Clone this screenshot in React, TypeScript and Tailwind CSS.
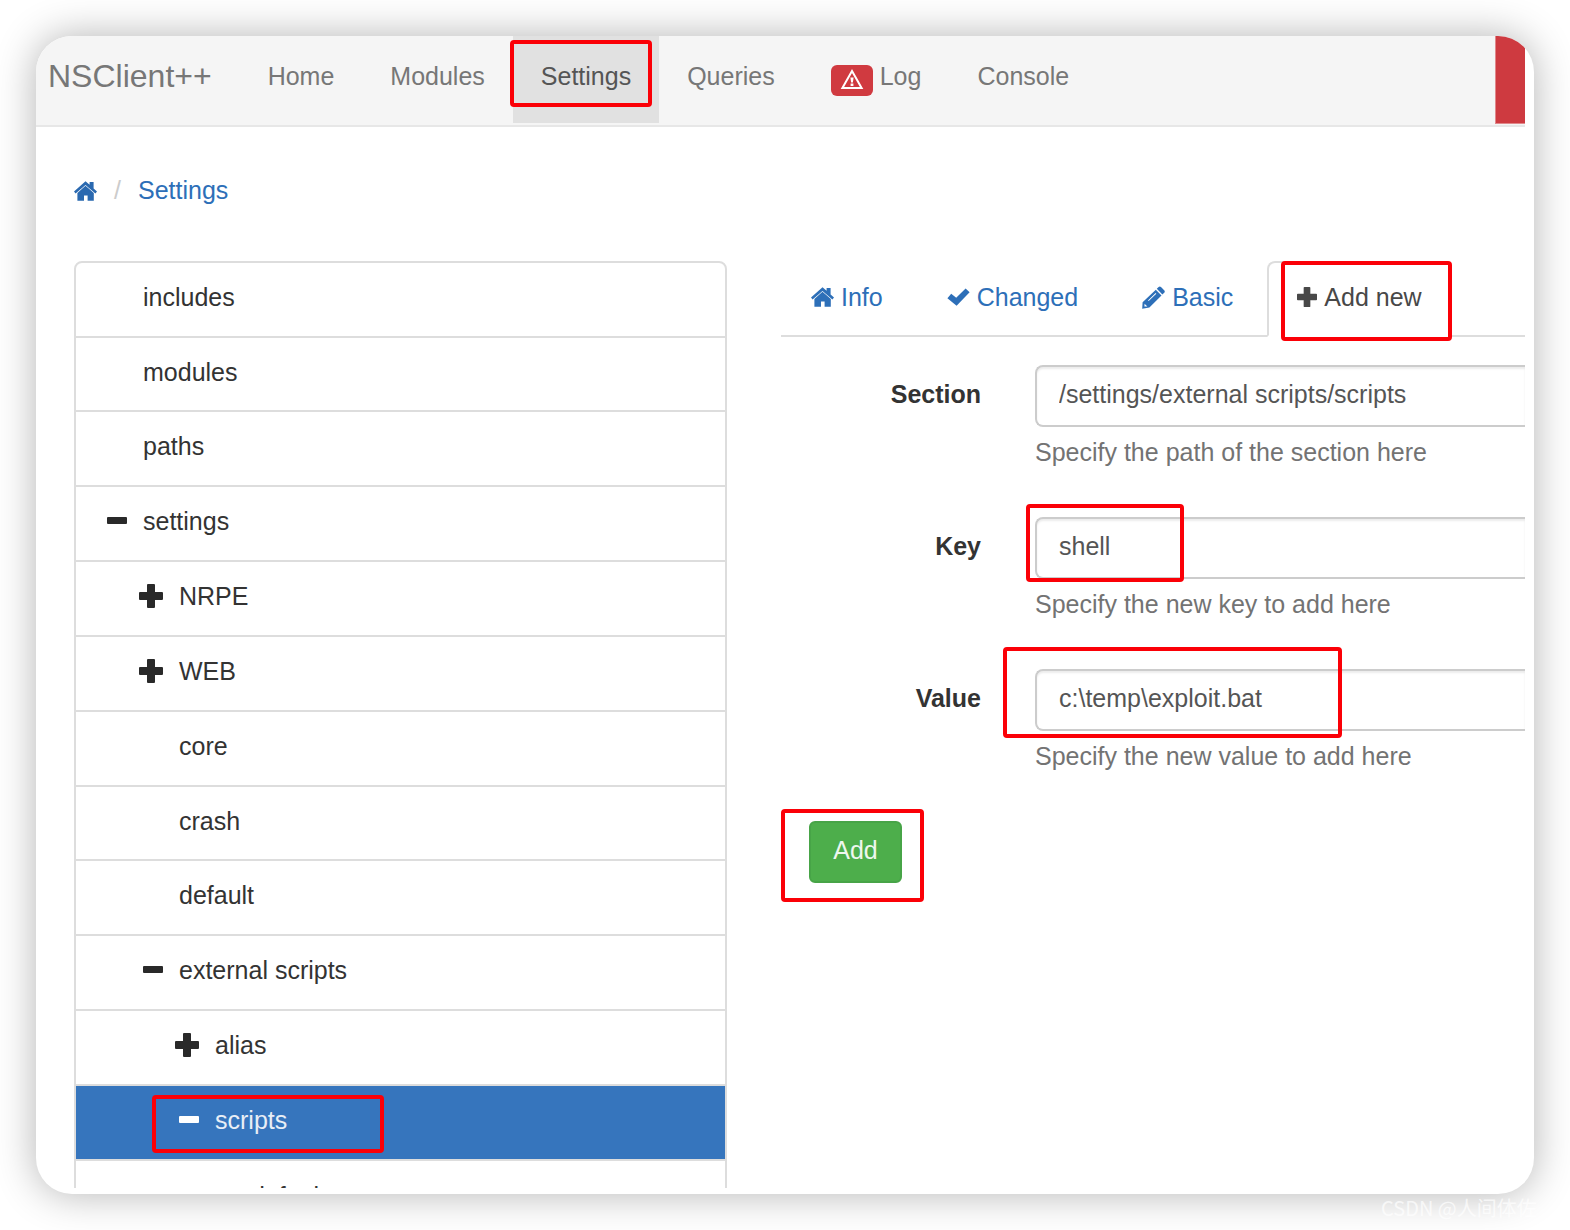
import { useState } from 'react';
import type { ReactNode } from 'react';
import clsx from 'clsx';

function HomeIcon() {
  return (
    <svg width="23" height="20" viewBox="0 0 23 20" fill="currentColor" aria-hidden="true">
      <path d="M11.5 0.2 L15.6 3.8 V1 H19.6 V7.4 L23 10.6 L21.4 12.6 L11.5 3.9 L1.6 12.6 L0 10.6 Z" />
      <path d="M11.5 4.8 L19.8 12 V19.8 H13.6 V14.4 H10 V19.8 H3.4 V12 Z" />
    </svg>
  );
}

function CheckIcon() {
  return (
    <svg width="23" height="20" viewBox="0 0 23 20" fill="currentColor" aria-hidden="true">
      <path d="M18.6 1.6 L22.6 5.2 L9.6 18.8 L0.4 11.2 L4.2 6.8 L9.2 10.8 Z" />
    </svg>
  );
}

function PencilIcon() {
  return (
    <svg width="23" height="23" viewBox="0 0 23 23" fill="currentColor" aria-hidden="true">
      <path d="M16.6 0.9 Q17.8 0 19 1 L22.4 4.6 Q23.2 5.8 22.2 6.8 L20.4 8.6 L14.8 2.8 Z" />
      <path
        fillRule="evenodd"
        d="M13.8 3.7 L19.5 9.6 L7.4 21.6 L0.2 22.8 L0.6 16.2 Z M13.6 7 L6 14.4 L6.7 15.1 L14.3 7.7 Z M2.6 17.8 L2.4 20.6 L5.4 20.4 Z"
      />
    </svg>
  );
}

function PlusIcon({ size }: { size: number }) {
  return (
    <svg width={size} height={size} viewBox="0 0 24 24" fill="currentColor" aria-hidden="true">
      <path d="M9 0 H15 Q16 0 16 1 V8 H23 Q24 8 24 9 V15 Q24 16 23 16 H16 V23 Q16 24 15 24 H9 Q8 24 8 23 V16 H1 Q0 16 0 15 V9 Q0 8 1 8 H8 V1 Q8 0 9 0 Z" />
    </svg>
  );
}

function MinusIcon() {
  return (
    <svg width="20" height="24" viewBox="0 0 20 24" fill="currentColor" aria-hidden="true">
      <rect x="0" y="8" width="20" height="7" rx="1" />
    </svg>
  );
}

function WarningIcon() {
  return (
    <svg width="26" height="26" viewBox="0 0 26 26" fill="none" aria-hidden="true">
      <path d="M13 3 L22.6 20 H3.4 Z" stroke="white" strokeWidth="2" />
      <path d="M11.4 9.5 H14.6 L13.9 14.6 H12.1 Z M11.6 15.6 H14.4 V18 H11.6 Z" fill="white" />
    </svg>
  );
}

// Red rectangle used to point at the steps to follow
function Marker({ className }: { className: string }) {
  return (
    <span
      className={clsx('absolute border-4 border-[#fb0007] rounded-sm pointer-events-none', className)}
    />
  );
}

type Node = { label: string; depth: number; toggle?: 'plus' | 'minus'; active?: boolean };

const nodes: Node[] = [
  { label: 'includes', depth: 0 },
  { label: 'modules', depth: 0 },
  { label: 'paths', depth: 0 },
  { label: 'settings', depth: 0, toggle: 'minus' },
  { label: 'NRPE', depth: 1, toggle: 'plus' },
  { label: 'WEB', depth: 1, toggle: 'plus' },
  { label: 'core', depth: 1 },
  { label: 'crash', depth: 1 },
  { label: 'default', depth: 1 },
  { label: 'external scripts', depth: 1, toggle: 'minus' },
  { label: 'alias', depth: 2, toggle: 'plus' },
  { label: 'scripts', depth: 2, toggle: 'minus', active: true },
  { label: 'default', depth: 3 },
];

const gutters = ['w-[67px]', 'w-[103px]', 'w-[139px]', 'w-[175px]'];

function NavItem({ active, children }: { active?: boolean; children: ReactNode }) {
  return (
    <li className="relative">
      <a
        href="#"
        className={clsx(
          'flex items-center gap-[7px] h-[87px] px-7 pb-[6px]',
          active ? 'bg-[#e1e1e1] text-[#555]' : 'text-[#777]',
        )}
      >
        {children}
      </a>
      {active && <Marker className="-left-[3px] top-1 w-[142px] h-[67px]" />}
    </li>
  );
}

function Tab({ icon, label, active }: { icon: ReactNode; label: string; active?: boolean }) {
  return (
    <li className="relative mr-1 -mb-[2px]">
      <a
        href="#"
        className={clsx(
          'flex items-center gap-[7px] h-[76px] px-7 pb-1 border-2 rounded-t-lg',
          active
            ? 'border-[#ddd] border-b-white bg-white text-[#484848]'
            : 'border-transparent text-[#2d6fb8]',
        )}
      >
        {icon}
        {label}
      </a>
      {active && <Marker className="left-[14px] top-0 w-[171px] h-[80px]" />}
    </li>
  );
}

type FieldProps = {
  id: string;
  label: string;
  help: string;
  value: string;
  onChange: (value: string) => void;
  marker?: string;
};

function Field({ id, label, help, value, onChange, marker }: FieldProps) {
  return (
    <div className="flex mb-7">
      <label htmlFor={id} className="w-[200px] shrink-0 pt-3 text-right font-bold text-[#333]">
        {label}
      </label>
      <div className="relative flex-1 ml-[54px]">
        <input
          id={id}
          type="text"
          value={value}
          onChange={(e) => onChange(e.target.value)}
          className="block w-full h-[62px] px-[22px] pb-1 border-2 border-r-0 border-[#ccc] rounded-l-lg bg-white text-[#555] shadow-[inset_0_2px_2px_rgba(0,0,0,0.08)] focus:outline-none"
        />
        <p className="pt-2 leading-[35px] h-[62px] text-[#737373]">{help}</p>
        {marker && <Marker className={marker} />}
      </div>
    </div>
  );
}

export default function App() {
  const [section, setSection] = useState('/settings/external scripts/scripts');
  const [key, setKey] = useState('shell');
  const [value, setValue] = useState('c:\\temp\\exploit.bat');

  return (
    <div className="relative h-screen p-9 bg-white overflow-hidden font-['Liberation_Sans',Arial,sans-serif] text-[25px] leading-[35px]">
      <div className="h-full rounded-[36px] bg-white shadow-[0_0_40px_rgba(0,0,0,0.3)] overflow-hidden pr-[9px] pb-[6px]">
        <div className="h-full overflow-hidden">
          {/* Navbar */}
          <nav className="flex h-[91px] bg-[#f5f5f5] border-b-2 border-[#e7e7e7]">
            <a href="#" className="h-[87px] pl-3 pr-7 pb-[6px] flex items-center text-[32px] text-[#777]">
              NSClient++
            </a>
            <ul className="flex">
              <NavItem>Home</NavItem>
              <NavItem>Modules</NavItem>
              <NavItem active>Settings</NavItem>
              <NavItem>Queries</NavItem>
              <NavItem>
                <span className="flex items-center justify-center w-[42px] h-[31px] mt-2 rounded-md bg-[#d03a40]">
                  <WarningIcon />
                </span>
                Log
              </NavItem>
              <NavItem>Console</NavItem>
            </ul>
            <div className="ml-auto w-[30px] h-[88px] bg-[#ce3a40] border-l border-b border-[#e0888b]" />
          </nav>

          <div className="pl-[38px]">
            {/* Breadcrumb */}
            <nav className="flex items-center gap-[17px] pt-[46px]" aria-label="Breadcrumb">
              <a href="#" className="text-[#2a69b0]" aria-label="Home">
                <HomeIcon />
              </a>
              <span className="text-[#ccc]">/</span>
              <a href="#" className="text-[#2d6fb8]">
                Settings
              </a>
            </nav>

            <div className="flex items-start gap-[54px] pt-[53px]">
              {/* Settings tree */}
              <ul className="w-[653px] shrink-0 border-2 border-[#ddd] rounded-t-lg divide-y-2 divide-[#ddd]">
                {nodes.map((node, i) => (
                  <li
                    key={i}
                    className={clsx(
                      'relative h-[75px] nth-[6n+2]:h-[74px]',
                      node.active && 'bg-[#3675bd]',
                    )}
                  >
                    <a
                      href="#"
                      className={clsx(
                        'flex items-center h-full pb-1',
                        node.active ? 'text-[#e8eef6]' : 'text-[#333]',
                      )}
                    >
                      <span
                        className={clsx(
                          'flex justify-end pr-4 pb-[2px] shrink-0',
                          gutters[node.depth],
                          node.active ? 'text-white' : 'text-[#292929]',
                        )}
                      >
                        {node.toggle === 'plus' && <PlusIcon size={24} />}
                        {node.toggle === 'minus' && <MinusIcon />}
                      </span>
                      {node.label}
                    </a>
                    {node.active && <Marker className="left-[76px] top-[9px] w-[232px] h-[58px]" />}
                  </li>
                ))}
              </ul>

              {/* Editor */}
              <div className="flex-1 min-w-0">
                <ul className="flex border-b-2 border-[#ddd] whitespace-nowrap">
                  <Tab icon={<HomeIcon />} label="Info" />
                  <Tab icon={<CheckIcon />} label="Changed" />
                  <Tab icon={<PencilIcon />} label="Basic" />
                  <Tab icon={<PlusIcon size={20} />} label="Add new" active />
                </ul>

                <form className="pt-7" onSubmit={(e) => e.preventDefault()}>
                  <Field
                    id="section"
                    label="Section"
                    help="Specify the path of the section here"
                    value={section}
                    onChange={setSection}
                  />
                  <Field
                    id="key"
                    label="Key"
                    help="Specify the new key to add here"
                    value={key}
                    onChange={setKey}
                    marker="-left-[9px] -top-[13px] w-[158px] h-[78px]"
                  />
                  <Field
                    id="value"
                    label="Value"
                    help="Specify the new value to add here"
                    value={value}
                    onChange={setValue}
                    marker="-left-8 -top-[22px] w-[339px] h-[91px]"
                  />
                  <div className="relative pl-7">
                    <button
                      type="submit"
                      className="w-[93px] h-[62px] pb-1 rounded-md border-2 border-[#47a447] bg-[#4dae4b] text-[#eef7ee]"
                    >
                      Add
                    </button>
                    <Marker className="left-0 -top-3 w-[143px] h-[93px]" />
                  </div>
                </form>
              </div>
            </div>
          </div>
        </div>
      </div>

      <p className="absolute left-[1381px] top-[1194px] whitespace-nowrap font-['Noto_Sans_CJK_SC',sans-serif] text-xl leading-[28px] text-white/70">
        CSDN @人间体佐
      </p>
    </div>
  );
}
